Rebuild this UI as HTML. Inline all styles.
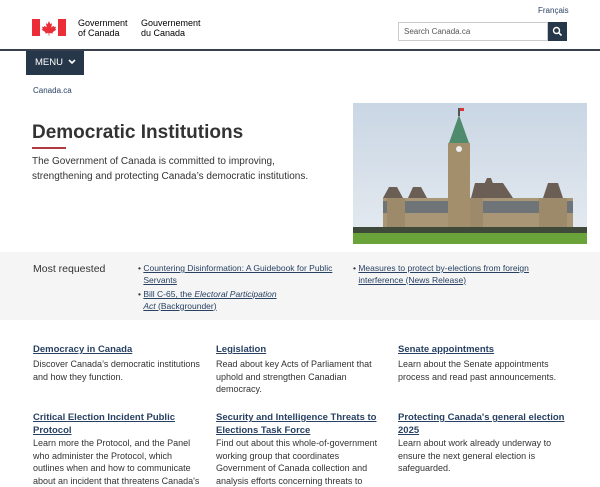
<!DOCTYPE html>
<html><head><meta charset="utf-8"><style>
*{margin:0;padding:0;box-sizing:border-box}
body{width:600px;height:480px;overflow:hidden;background:#fff;font-family:"Liberation Sans",sans-serif;color:#333;position:relative}
a{color:#284162}
.abs{position:absolute}
.link{display:block;color:#284162;text-decoration:underline;font-weight:bold;font-size:9.5px;line-height:13px}
.desc{font-size:9px;line-height:12.5px;color:#333}
.ml{display:inline-block;vertical-align:top;color:#284162;text-decoration:underline;font-size:8.5px;line-height:11.5px}
</style></head><body>
<a class="abs" style="left:538px;top:6px;font-size:8px;color:#284162">Français</a>
<svg class="abs" style="left:32px;top:19px" width="34" height="17" viewBox="0 0 34 17">
<rect x="0" y="0" width="8" height="17" fill="#eb2d37"/><rect x="26" y="0" width="8" height="17" fill="#eb2d37"/>
<path d="M17 2 L18.3 5 L20 4.3 L19.3 8.5 L21.5 6.8 L22 8 L24 7.6 L23.3 10 L24.5 10.6 L20.5 13.3 L21 14.5 L17.4 14 L17.4 16.5 L16.6 16.5 L16.6 14 L13 14.5 L13.5 13.3 L9.5 10.6 L10.7 10 L10 7.6 L12 8 L12.5 6.8 L14.7 8.5 L14 4.3 L15.7 5 Z" fill="#eb2d37"/></svg>
<div class="abs" style="left:78px;top:18px;font-size:9px;line-height:10px;color:#000">Government<br>of Canada</div>
<div class="abs" style="left:141px;top:18px;font-size:9px;line-height:10px;color:#000">Gouvernement<br>du Canada</div>
<div class="abs" style="left:398px;top:22px;width:150px;height:19px;border:1px solid #ccc;font-size:8px;color:#555;padding:4px 5px">Search Canada.ca</div>
<div class="abs" style="left:548px;top:22px;width:19px;height:19px;background:#26374a"><svg width="19" height="19"><circle cx="8.5" cy="8.5" r="3" stroke="#fff" stroke-width="1.4" fill="none"/><line x1="10.7" y1="10.7" x2="13.5" y2="13.5" stroke="#fff" stroke-width="1.6"/></svg></div>
<div class="abs" style="left:0;top:49px;width:600px;height:2px;background:#38414d"></div>
<div class="abs" style="left:26px;top:51px;width:58px;height:24px;background:#26374a;color:#fff;font-size:9.5px;padding:6px 0 0 9px">MENU <svg width="8" height="7" style="margin-left:2px"><path d="M1 2 L4 5 L7 2" stroke="#fff" stroke-width="1.6" fill="none"/></svg></div>
<a class="abs" style="left:33px;top:86px;font-size:8px">Canada.ca</a>
<div class="abs" style="left:32px;top:122px;font-size:19px;font-weight:bold;color:#333">Democratic Institutions</div>
<div class="abs" style="left:32px;top:147px;width:34px;height:2px;background:#af3c43"></div>
<div class="abs" style="left:32px;top:154px;font-size:10px;line-height:15px;color:#333">The Government of Canada is committed to improving,<br>strengthening and protecting Canada’s democratic institutions.</div>
<svg class="abs" style="left:353px;top:103px" width="234" height="141" viewBox="0 0 234 141">
<defs><linearGradient id="s" x1="0" y1="0" x2="0" y2="1"><stop offset="0" stop-color="#c9d6e4"/><stop offset="1" stop-color="#e6ebf0"/></linearGradient></defs>
<rect width="234" height="141" fill="url(#s)"/>
<rect x="30" y="95" width="190" height="36" fill="#a89677"/>
<rect x="30" y="98" width="190" height="12" fill="#6f7478"/>
<path d="M30 95 L36 84 L44 84 L50 95 Z M55 95 L60 84 L68 84 L74 95 Z M118 95 L122 80 L150 80 L160 95 Z M125 95 L134 75 L138 75 L145 95 Z M190 95 L195 80 L205 80 L210 95 Z M40 100 L44 90 L48 100Z M195 96 L198 88 L202 96Z" fill="#6b5f55"/>
<rect x="34" y="95" width="18" height="36" fill="#9d8a6a"/><rect x="186" y="95" width="28" height="36" fill="#9d8a6a"/><rect x="110" y="95" width="20" height="36" fill="#9d8a6a"/>
<rect x="95" y="40" width="22" height="91" fill="#a38f6c"/>
<path d="M96 40 L106 12 L116 40 Z" fill="#4f8a6d"/>
<rect x="105" y="5" width="2" height="8" fill="#555"/><rect x="107" y="5" width="4" height="3" fill="#d33"/>
<circle cx="106" cy="46" r="3" fill="#eee"/>
<rect x="0" y="124" width="234" height="7" fill="#3f4a3a"/>
<rect x="0" y="130" width="234" height="11" fill="#6aa33a"/>
</svg>
<div class="abs" style="left:0;top:252px;width:600px;height:68px;background:#f5f5f5"></div>
<div class="abs" style="left:33px;top:263px;font-size:10.5px;color:#333">Most requested</div>
<div class="abs" style="left:138px;top:263px;font-size:8.5px;line-height:11.5px">• <a class="ml" style="width:200px">Countering Disinformation: A Guidebook for Public Servants</a></div>
<div class="abs" style="left:138px;top:289px;font-size:8.5px;line-height:11.5px">• <a class="ml" style="width:140px">Bill C-65, the <i>Electoral Participation Act</i> (Backgrounder)</a></div>
<div class="abs" style="left:353px;top:263px;font-size:8.5px;line-height:11.5px">• <a class="ml" style="width:200px">Measures to protect by-elections from foreign interference (News Release)</a></div>

<div class="abs" style="left:33px;top:343px;width:170px"><a class="link">Democracy in Canada</a><div class="desc" style="margin-top:2px">Discover Canada’s democratic institutions and how they function.</div></div>
<div class="abs" style="left:216px;top:343px;width:165px"><a class="link">Legislation</a><div class="desc" style="margin-top:2px">Read about key Acts of Parliament that uphold and strengthen Canadian democracy.</div></div>
<div class="abs" style="left:398px;top:343px;width:170px"><a class="link">Senate appointments</a><div class="desc" style="margin-top:2px">Learn about the Senate appointments process and read past announcements.</div></div>
<div class="abs" style="left:33px;top:411px;width:170px"><a class="link">Critical Election Incident Public Protocol</a><div class="desc">Learn more the Protocol, and the Panel who administer the Protocol, which outlines when and how to communicate about an incident that threatens Canada's</div></div>
<div class="abs" style="left:216px;top:411px;width:165px"><a class="link">Security and Intelligence Threats to Elections Task Force</a><div class="desc">Find out about this whole-of-government working group that coordinates Government of Canada collection and analysis efforts concerning threats to</div></div>
<div class="abs" style="left:398px;top:411px;width:170px"><a class="link">Protecting Canada's general election 2025</a><div class="desc">Learn about work already underway to ensure the next general election is safeguarded.</div></div>
</body></html>
